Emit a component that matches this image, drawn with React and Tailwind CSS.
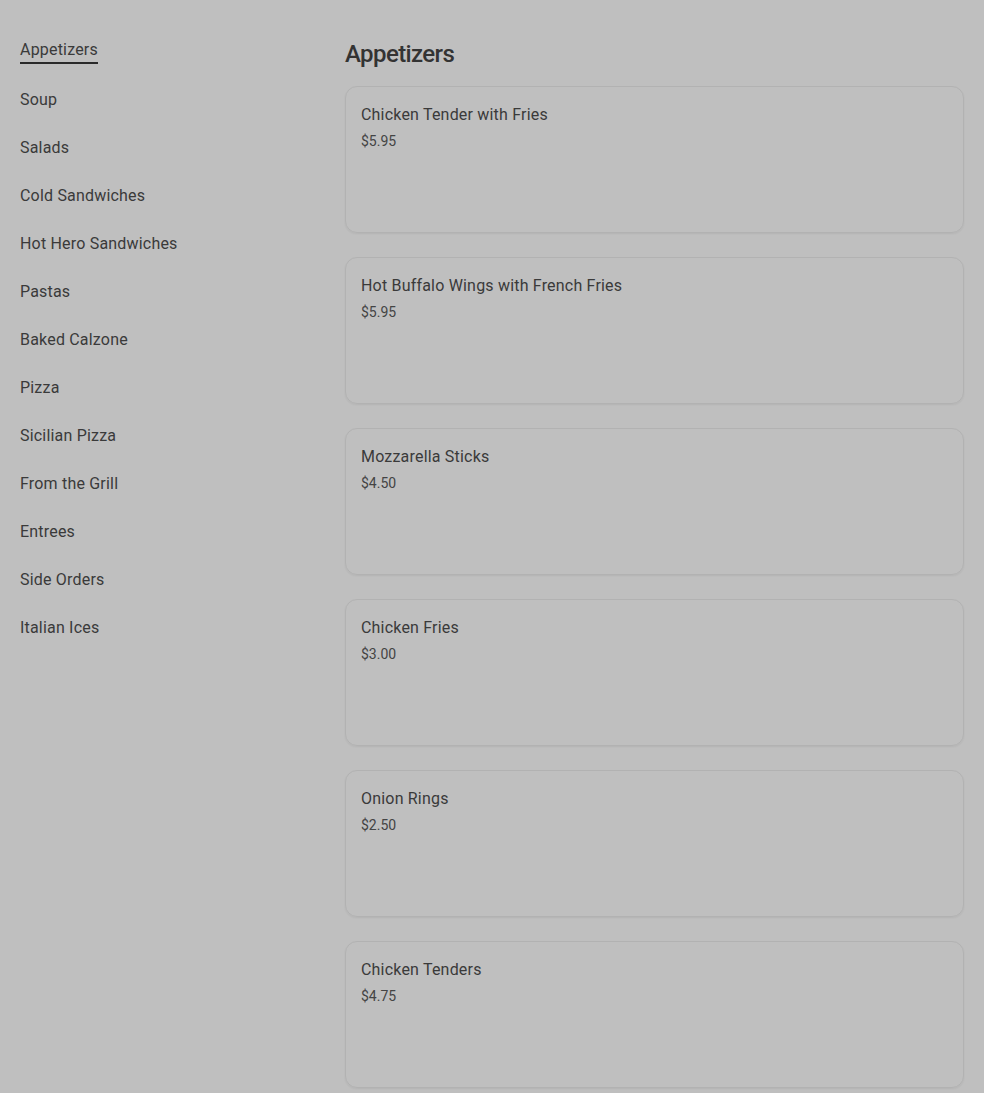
const categories = [
  'Appetizers',
  'Soup',
  'Salads',
  'Cold Sandwiches',
  'Hot Hero Sandwiches',
  'Pastas',
  'Baked Calzone',
  'Pizza',
  'Sicilian Pizza',
  'From the Grill',
  'Entrees',
  'Side Orders',
  'Italian Ices',
];

const items = [
  { name: 'Chicken Tender with Fries', price: '$5.95' },
  { name: 'Hot Buffalo Wings with French Fries', price: '$5.95' },
  { name: 'Mozzarella Sticks', price: '$4.50' },
  { name: 'Chicken Fries', price: '$3.00' },
  { name: 'Onion Rings', price: '$2.50' },
  { name: 'Chicken Tenders', price: '$4.75' },
];

export default function App() {
  return (
    <div
      className="min-h-[1093px] bg-[#bfbfbf] text-[#3a3a3a] flex tracking-[0.012em]"
      style={{ fontFamily: 'Roboto, "Noto Sans", sans-serif' }}
    >
      {/* Category nav */}
      <nav className="w-[345px] shrink-0 pl-5 pt-[38px]">
        <ul className="flex flex-col">
          {categories.map((c, i) => (
            <li key={c} className={i === 0 ? 'h-[50px]' : 'h-12'}>
              <span
                className={`inline-block text-base leading-6 ${
                  i === 0 ? 'border-b-2 border-[#2a2a2a]' : ''
                }`}
              >
                {c}
              </span>
            </li>
          ))}
        </ul>
      </nav>

      {/* Items */}
      <main className="flex-1 min-w-0 pr-5 pt-[38px]">
        <h1 className="text-2xl font-medium tracking-[-0.025em] leading-8 mb-4 text-[#333]">Appetizers</h1>
        <div className="flex flex-col gap-6">
          {items.map(it => (
            <div
              key={it.name}
              className="h-[147px] rounded-xl border border-[#b2b2b2] shadow-[0_1px_2px_rgba(0,0,0,0.06)] px-[15px] pt-4"
            >
              <p className="text-base leading-6">{it.name}</p>
              <p className="text-sm leading-5 mt-1 text-[#444] tracking-normal">{it.price}</p>
            </div>
          ))}
        </div>
      </main>
    </div>
  );
}
